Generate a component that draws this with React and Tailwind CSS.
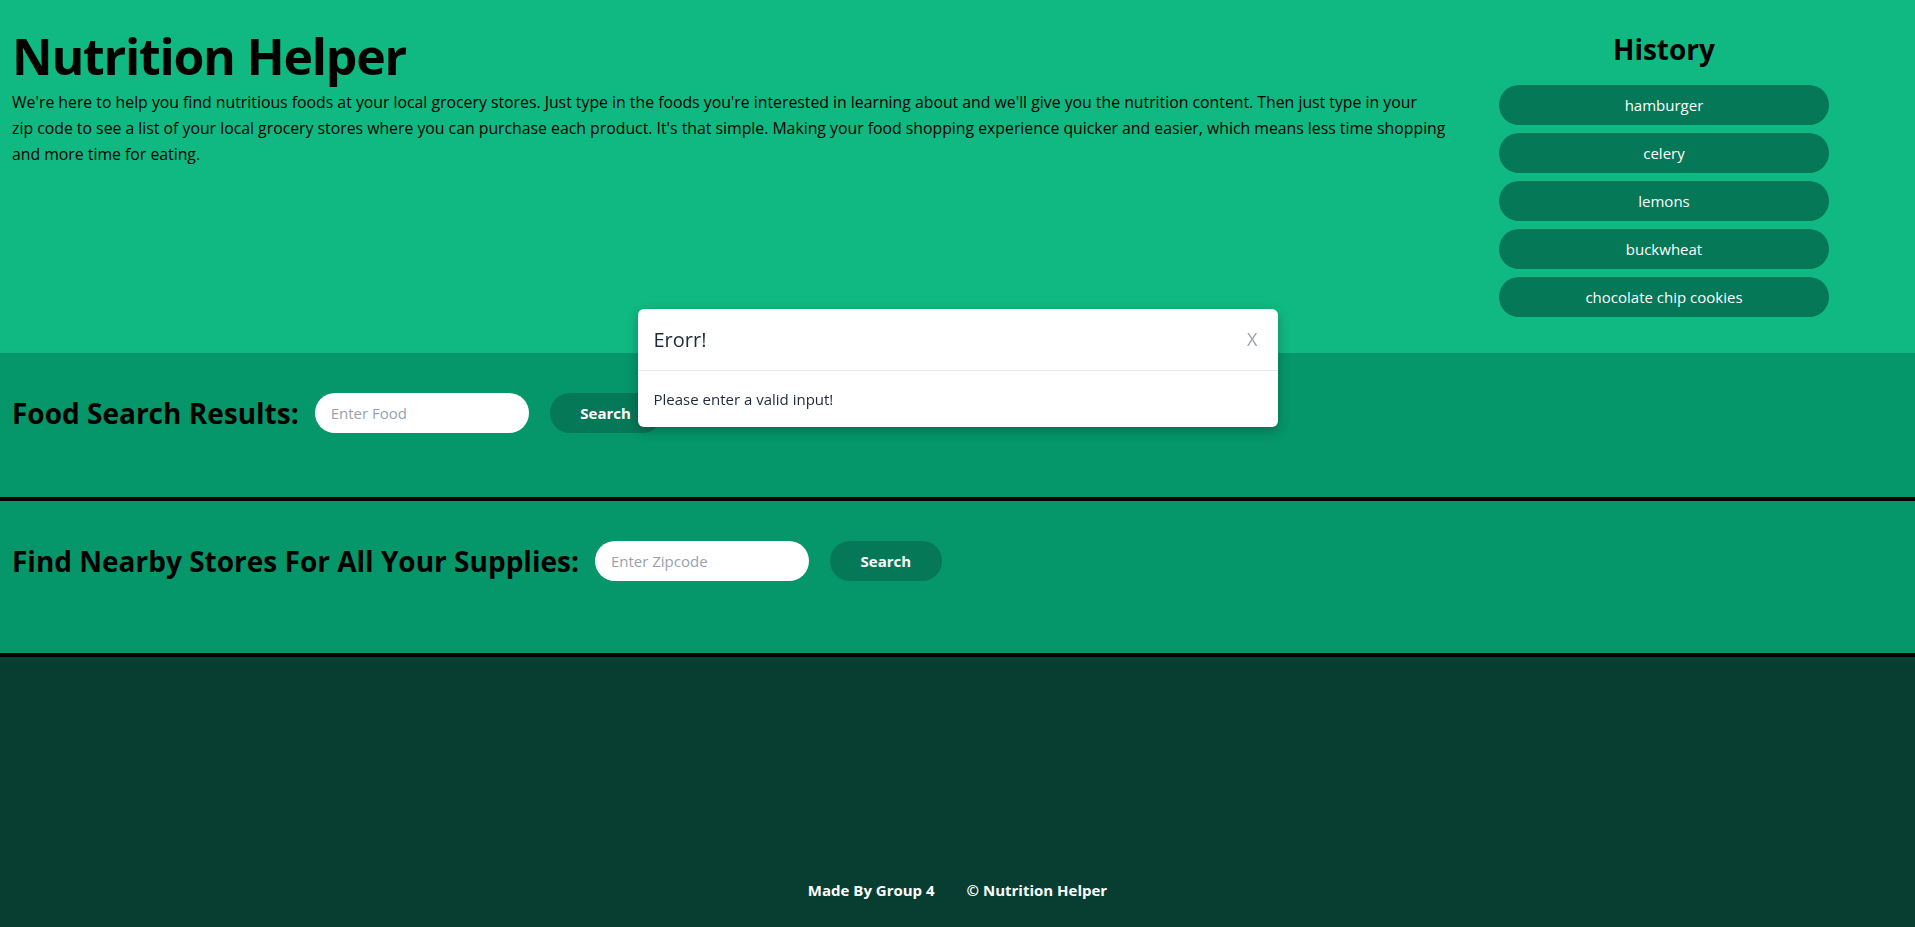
const history = ['hamburger', 'celery', 'lemons', 'buckwheat', 'chocolate chip cookies'];

// One search row: heading, pill input, pill button
const SearchRow = ({ title, placeholder }) => (
  <div className="flex items-center">
    <h2 className="text-[28px] font-bold text-black leading-none">{title}</h2>
    <input
      placeholder={placeholder}
      className="ml-4 w-[214px] h-[40px] rounded-full bg-white px-4 text-[15px] text-gray-800 placeholder:text-gray-400 outline-none"
    />
    <button className="ml-[21px] w-[112px] h-[40px] rounded-full bg-[#047857] text-white text-[15px] font-bold">
      Search
    </button>
  </div>
);

export default function App() {
  return (
    <div className="min-h-screen flex flex-col font-['Open_Sans',sans-serif]">
      {/* header */}
      <header className="bg-[#10b981] h-[353px] flex">
        <div className="w-[1470px] pl-3 pt-[26px]">
          <h1 className="text-[50px] font-bold leading-[60px] text-black tracking-tight">Nutrition Helper</h1>
          <p className="mt-[3px] text-[15.8px] leading-[26px] text-black">
            We're here to help you find nutritious foods at your local grocery stores. Just type in the foods you're interested in learning about and we'll give you the nutrition content. Then just type in your<br />
            zip code to see a list of your local grocery stores where you can purchase each product. It's that simple. Making your food shopping experience quicker and easier, which means less time shopping<br />
            and more time for eating.
          </p>
        </div>
        <div className="flex-1 flex flex-col items-center pt-[29px] pr-[57px]">
          <h2 className="text-[28px] font-bold leading-[40px] text-black">History</h2>
          <div className="mt-[16px] flex flex-col gap-2">
            {history.map((item) => (
              <button key={item} className="w-[330px] h-[40px] rounded-full bg-[#047857] text-white text-[15px]">
                {item}
              </button>
            ))}
          </div>
        </div>
      </header>

      {/* food search */}
      <section className="bg-[#059669] h-[148px] border-b-4 border-black pl-3 pt-[40px]">
        <SearchRow title="Food Search Results:" placeholder="Enter Food" />
      </section>

      {/* stores search */}
      <section className="bg-[#059669] h-[156px] border-b-4 border-black pl-3 pt-[40px]">
        <SearchRow title="Find Nearby Stores For All Your Supplies:" placeholder="Enter Zipcode" />
      </section>

      {/* footer */}
      <footer className="flex-1 bg-[#083d31] flex items-end justify-center pb-[26px]">
        <div className="flex gap-8 text-white text-[15px] font-bold">
          <span>Made By Group 4</span>
          <span>© Nutrition Helper</span>
        </div>
      </footer>

      {/* error modal */}
      <div className="fixed top-[309px] left-1/2 -translate-x-1/2 w-[640px] bg-white rounded-md shadow-[0_4px_12px_rgba(0,0,0,0.25)]">
        <div className="h-[62px] flex items-center justify-between px-4 border-b border-gray-200">
          <h3 className="text-[20px] text-gray-800">Erorr!</h3>
          <span className="text-[18px] text-gray-400 mr-1">X</span>
        </div>
        <div className="h-[56px] flex items-center px-4 text-[15px] text-gray-800">
          Please enter a valid input!
        </div>
      </div>
    </div>
  );
}
